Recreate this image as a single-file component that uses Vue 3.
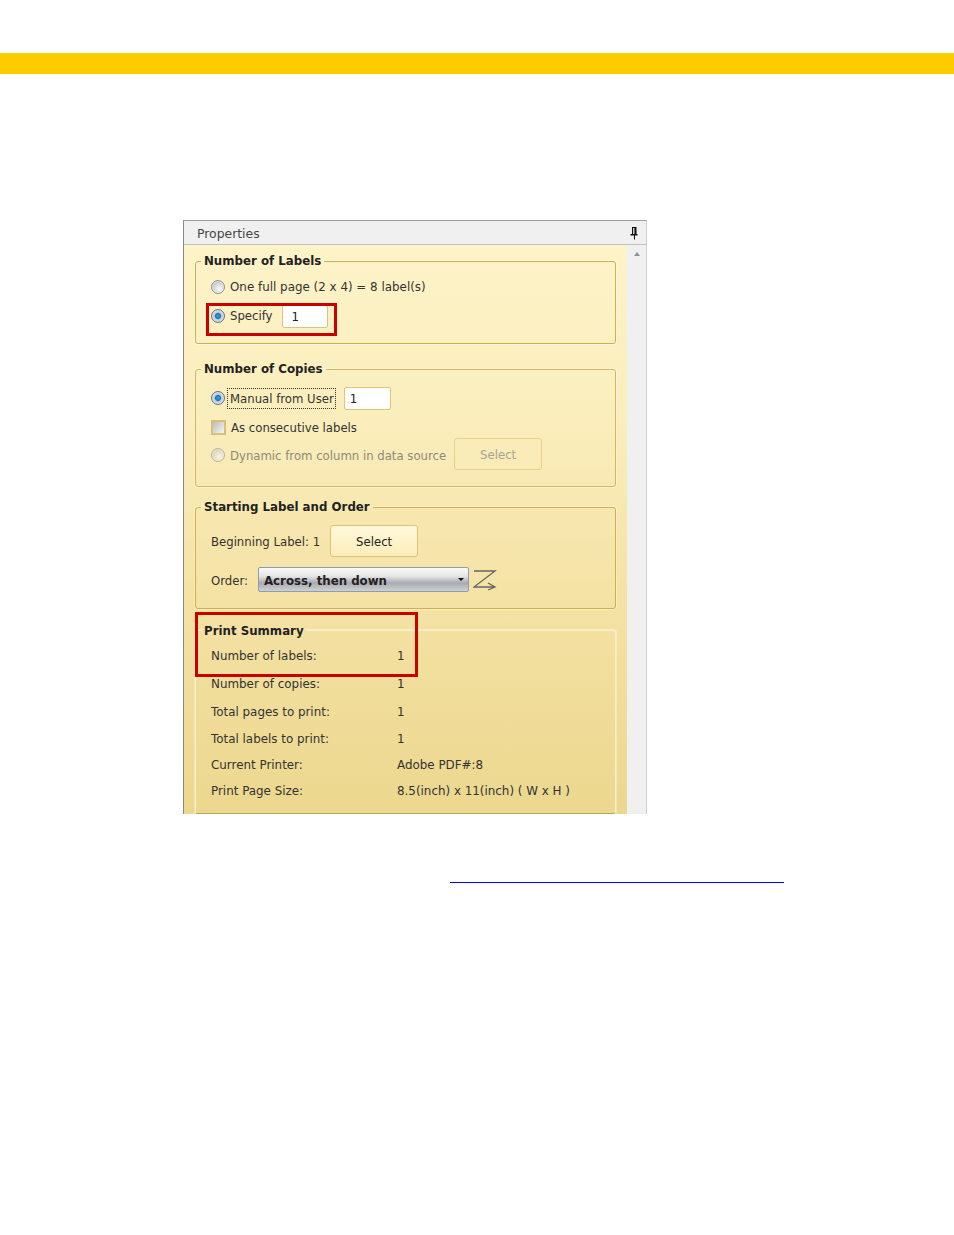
<script setup>
const summary = [
  { label: 'Number of labels:', value: '1', cls: 'gap-0' },
  { label: 'Number of copies:', value: '1', cls: 'gap-2' },
  { label: 'Total pages to print:', value: '1', cls: 'gap-2' },
  { label: 'Total labels to print:', value: '1', cls: 'gap-1' },
  { label: 'Current Printer:', value: 'Adobe PDF#:8', cls: 'gap-0' },
  { label: 'Print Page Size:', value: '8.5(inch) x 11(inch) ( W x H )', cls: 'gap-0' }
]
</script>

<template>
  <div class="page">
    <div class="topbar"></div>
    <section class="panel">
      <header class="panel-head">
        <span class="title">Properties</span>
        <svg class="pin" width="10" height="14" viewBox="0 0 10 14">
          <path d="M3 1h4.500v7h1v1.500H6v4H5v-4H1.500V8h1.500z" fill="#111" />
          <rect x="4" y="2" width="1.500" height="6" fill="#ccc" />
        </svg>
      </header>
      <div class="panel-body">
        <div class="groups">
          <fieldset class="group g1">
            <legend>Number of Labels</legend>
            <div class="row h24">
              <span class="radio"></span>
              <span class="label full">One full page (2 x 4) = 8 label(s)</span>
            </div>
            <div class="row h24 mt5">
              <span class="radio on"></span>
              <span class="label">Specify</span>
              <span class="input w46 ml9">1</span>
            </div>
          </fieldset>

          <fieldset class="group g2">
            <legend>Number of Copies</legend>
            <div class="row h24">
              <span class="radio on"></span>
              <span class="label focus">Manual from User</span>
              <span class="input w47 ml9">1</span>
            </div>
            <div class="row h20 mt7">
              <span class="check"></span>
              <span class="label nudge">As consecutive labels</span>
            </div>
            <div class="row h32 mt1">
              <span class="radio off"></span>
              <span class="label muted nudge-2">Dynamic from column in data source</span>
              <span class="btn off ml8">Select</span>
            </div>
          </fieldset>

          <fieldset class="group g3">
            <legend>Starting Label and Order</legend>
            <div class="row h32">
              <span class="plain nudge">Beginning Label: 1</span>
              <span class="btn ml10">Select</span>
            </div>
            <div class="row h25 mt10">
              <span class="plain nudge">Order:</span>
              <span class="select">
                Across, then down
                <i class="caret"></i>
              </span>
              <svg class="zicon" width="24" height="22" viewBox="0 0 24 22" fill="none" stroke="#666" stroke-width="1.300">
                <path d="M1 2h21L1 18h21M15 14l7 4-7 3" />
              </svg>
            </div>
          </fieldset>

          <fieldset class="group g4">
            <legend>Print Summary</legend>
            <div v-for="item in summary" :key="item.label" class="sum-row" :class="item.cls">
              <span class="sum-label">{{ item.label }}</span>
              <span>{{ item.value }}</span>
            </div>
          </fieldset>
        </div>
        <aside class="scroll">
          <svg width="6" height="4" viewBox="0 0 6 4"><path d="M3 0l3 4H0z" fill="#8f8f8f" /></svg>
        </aside>
      </div>
      <div class="mark mark-a"></div>
      <div class="mark mark-b"></div>
    </section>
    <div class="link-line"></div>
  </div>
</template>

<style scoped>
.page {
  width: 954px;
  min-height: 1235px;
  background: #fff;
  padding-top: 53px;
  box-sizing: border-box;
  font-family: "DejaVu Sans", sans-serif;
  font-size: 11.7px;
  color: #333;
}
.topbar {
  height: 21px;
  background: #ffcc00;
}
.panel {
  position: relative;
  width: 464px;
  height: 594px;
  margin: 146px 0 0 183px;
  box-sizing: border-box;
  border: 1px solid #a0a0a0;
  border-bottom: 0;
  border-left-color: #8a8a8a;
  border-right-color: #cfcfcf;
  display: flex;
  flex-direction: column;
}
.panel-head {
  height: 24px;
  flex: none;
  background: #f0f0f0;
  border-bottom: 1px solid #c4c4c4;
  box-sizing: border-box;
  display: flex;
  align-items: center;
  justify-content: space-between;
  padding: 0 7px 0 13px;
  font-size: 12.4px;
  color: #444;
}
.title { padding-top: 2px; }
.pin { margin-top: 1px; }
.panel-body {
  flex: 1;
  display: flex;
  min-height: 0;
}
.groups {
  flex: 1;
  padding: 8px 11px 0;
  background: linear-gradient(#fdf3c8, #fbeebd 30%, #f5e3a6 60%, #ecd78e);
  overflow: hidden;
}
.scroll {
  width: 19px;
  flex: none;
  background: #f0f0f0;
  padding-top: 7px;
  box-sizing: border-box;
}
.scroll svg { display: block; margin: 0 auto; }
.group {
  margin: 0;
  padding: 0 15px;
  min-width: 0;
  border: 1px solid #cfae50;
  border-radius: 3px;
  box-shadow: 0 0 0 1px rgba(255, 255, 255, 0.35);
  display: block;
}
.group legend {
  margin-left: -10px;
  padding: 0 3px;
  height: 16px;
  line-height: 16px;
  font-weight: 700;
  font-size: 11.8px;
  color: #222;
}
.g4 legend { line-height: 18px; }
.g1 { padding-top: 6px; padding-bottom: 15px; }
.g2 {
  margin-top: 17px;
  padding-top: 9px;
  padding-bottom: 16px;
  border-color: #d5b660;
}
.g3 { margin-top: 12px; padding-top: 10px; padding-bottom: 16px; }
.g4 {
  margin-top: 13px;
  padding-top: 5px;
  padding-bottom: 9px;
  font-size: 11.9px;
  border-color: #f9f0c8;
  border-bottom-color: #b5a566;
}
.row {
  display: flex;
  align-items: center;
}
.h20 { height: 20px; }
.h24 { height: 24px; }
.h25 { height: 25px; }
.h32 { height: 32px; }
.mt1 { margin-top: 1px; }
.mt5 { margin-top: 5px; }
.mt7 { margin-top: 7px; }
.mt10 { margin-top: 10px; }
.ml8 { margin-left: 8px; }
.ml9 { margin-left: 9px; }
.ml10 { margin-left: 10px; }
.radio {
  width: 14px;
  height: 14px;
  flex: none;
  box-sizing: border-box;
  border-radius: 50%;
  border: 1px solid #8f8f8f;
  background: radial-gradient(circle at 60% 65%, #fbfbfb, #bdbdbd 80%);
  box-shadow: inset 0 0 0 1px rgba(255, 255, 255, 0.5);
  margin-right: 5px;
}
.radio.on {
  background: radial-gradient(circle, #2fa6e6 0, #1a77b8 30%, #c9d2da 44%, #aeb3ba 100%);
  border-color: #66717e;
}
.radio.off {
  opacity: 0.6;
  margin-top: 2px;
}
.check {
  width: 15px;
  height: 15px;
  flex: none;
  box-sizing: border-box;
  border: 2px solid #d8c078;
  background: linear-gradient(135deg, #bcbcbc, #f6f6f6);
  margin-right: 5px;
}
.label { white-space: nowrap; }
.full { font-size: 11.9px; }
.plain { white-space: nowrap; }
.nudge { padding-top: 2px; }
.nudge-2 { padding-top: 4px; }
.muted { color: #8f8a76; }
.focus {
  outline: 1px dotted #333;
  outline-offset: 0;
  margin-left: -2px;
  padding: 3px 1px 2px 2px;
}
.input {
  box-sizing: border-box;
  height: 23px;
  line-height: 23px;
  background: #fff;
  border: 1px solid #dcc47c;
  border-radius: 2px;
  padding-left: 5px;
  color: #222;
}
.w46 { width: 46px; padding-left: 9px; }
.w47 { width: 47px; }
.btn {
  box-sizing: border-box;
  width: 88px;
  height: 32px;
  line-height: 32px;
  text-align: center;
  border: 1px solid #dcc377;
  border-radius: 3px;
  background: linear-gradient(#fff8dc, #fcedb9);
  color: #222;
}
.btn.off {
  background: transparent;
  border-color: #e6d08a;
  color: #a8a390;
}
.select {
  position: relative;
  box-sizing: border-box;
  width: 211px;
  height: 25px;
  line-height: 26px;
  margin-left: 10px;
  padding-left: 5px;
  border: 1px solid #8f9db3;
  border-radius: 2px;
  background: linear-gradient(#fafafa, #e6e6e6 35%, #a9abb0 65%, #cfd0d2);
  font-weight: 700;
  font-size: 11.8px;
  color: #222;
  white-space: nowrap;
}
.caret {
  position: absolute;
  right: 4px;
  top: 10px;
  border: 3px solid transparent;
  border-top: 3px solid #111;
}
.zicon { margin-left: 4px; }
.sum-row {
  display: flex;
  align-items: center;
  height: 26px;
  white-space: nowrap;
}
.gap-1 { margin-top: 1px; }
.gap-2 { margin-top: 2px; }
.sum-label { width: 186px; flex: none; }
.mark {
  position: absolute;
  box-sizing: border-box;
  border: 3px solid #c80000;
  pointer-events: none;
}
.mark-a { left: 22px; top: 82px; width: 131px; height: 33px; }
.mark-b { left: 11px; top: 391px; width: 223px; height: 65px; }
.link-line {
  width: 334px;
  height: 1px;
  margin: 68px 0 0 450px;
  background: #0000ff;
}
</style>

<style>
body { background: #fff; }
</style>
